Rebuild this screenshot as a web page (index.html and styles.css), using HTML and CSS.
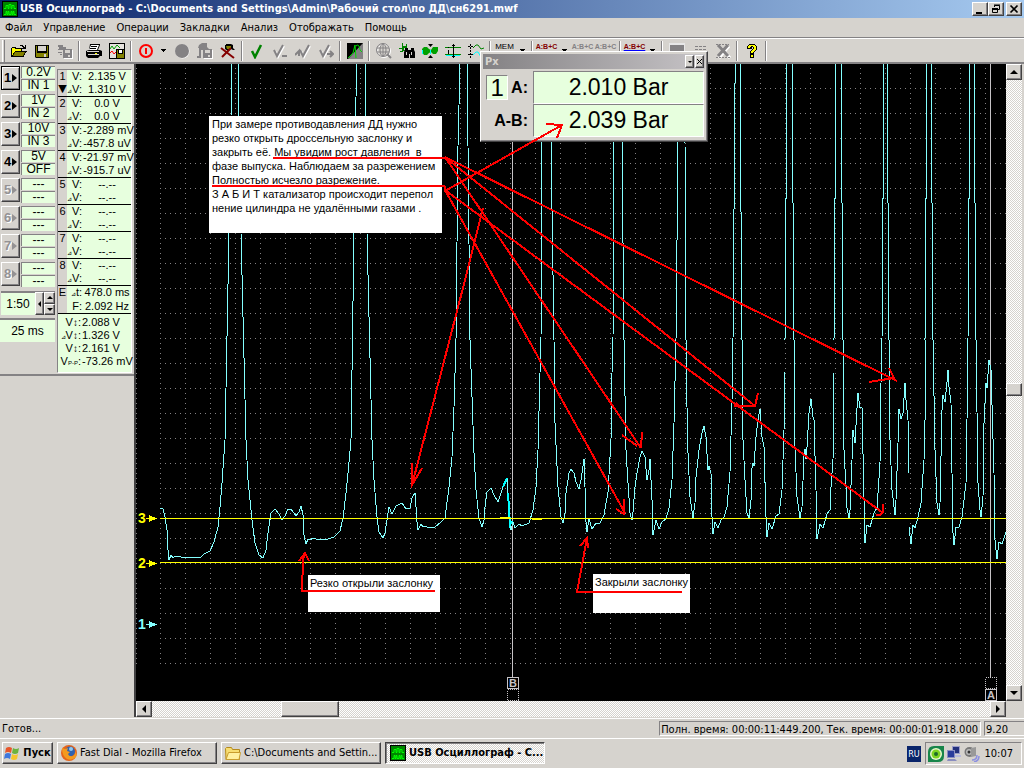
FILE: index.html
```html
<!DOCTYPE html>
<html lang="ru">
<head>
<meta charset="utf-8">
<title>USB Осциллограф</title>
<link rel="stylesheet" href="styles.css">
</head>
<body>
<svg class="defs" aria-hidden="true">
  <symbol id="app" viewBox="0 0 16 16"><path fill="#000" d="M0 0h16v16H0z"/><path fill="#008400" d="M1 1h14v14H1z"/><path fill="none" stroke="#0f0" d="M2 7.500h2v-3h2v3h1v-4h2v4h1v-3h2v3h2M2 13.500h2v-3h1v3h1v-3h1v3h2v-3h1v3h1v-3h1v3h2"/></symbol>
  <symbol id="diskgrey" viewBox="0 0 16 16"><path fill="#fff" d="M7 7h9v9H7z"/><path fill="#848284" d="M1 2h5v2h3v2H6v1H1V6h1V4H1zM1 9h4v1H1zM3 11h2v1H3zM6 6h9v9H6z"/><path fill="#d6d3ce" d="M8 7h5v3H8zM11 12h2v2h-2z"/></symbol>
  <symbol id="checkgrey" viewBox="0 0 16 16"><path fill="none" stroke="#fff" stroke-width="2" d="M3 8l3 6 6-11"/><path fill="none" stroke="#848284" stroke-width="2" d="M2 7l3 6 6-11"/></symbol>
</svg>

<header class="titlebar">
  <svg class="i16"><use href="#app"/></svg>
  <h1>USB Осциллограф - C:\Documents and Settings\Admin\Рабочий стол\по ДД\сн6291.mwf</h1>
  <div class="winbtns">
    <button aria-label="Свернуть"><svg viewBox="0 0 12 10"><path d="M2 8h6v2H2z"/></svg></button>
    <button aria-label="Восстановить"><svg viewBox="0 0 12 10"><path fill="none" stroke="#000" d="M4.500 3V1.500h5v4H8M2.500 4.500h5v4h-5zM4 1h6M2 4.500h6M2 5.500h6"/></svg></button>
    <button class="close" aria-label="Закрыть"><svg viewBox="0 0 12 10"><path stroke="#000" stroke-width="1.700" d="M2.500 1.500l7 7M9.500 1.500l-7 7"/></svg></button>
  </div>
</header>

<nav class="menubar">
  <a href="#">Файл</a><a href="#">Управление</a><a href="#">Операции</a><a href="#">Закладки</a><a href="#">Анализ</a><a href="#">Отображать</a><a href="#">Помощь</a>
</nav>

<div class="toolbar" role="toolbar">
  <i class="grip"></i>
  <button aria-label="Открыть"><svg class="i16" viewBox="0 0 16 16"><path fill="#000" d="M0 5h1V4h4v1h6v3h5v1h-1v1h-1v2h-1v2H0zM9 2h3v1h1v1h1V2h1v4h-4V5h1V4h-1V3H9z"/><path fill="#ff0" d="M1 5h3v1h6v2H4v1H3v1H2v2H1z"/><path fill="#848200" d="M4 9h10l-2 4H2z"/></svg></button>
  <button aria-label="Сохранить"><svg class="i16" viewBox="0 0 16 16"><path d="M1 2h14v13H2l-1-1z"/><path fill="#848200" d="M2 3h1v7h10V3h1v11H2z"/><path fill="#d6d3ce" d="M4 3h8v5H4zM10 11h2v3h-2z"/></svg></button>
  <button aria-label="Импорт"><svg class="i16"><use href="#diskgrey"/></svg></button>
  <i class="sep"></i>
  <button aria-label="Печать"><svg class="i16" viewBox="0 0 16 16"><path d="M4 1h10v1l-2 5h2l2 1v5h-2l-2 2H2l-2-2V8l3-1z"/><path fill="#fff" d="M5 2h8l-2 5H3z"/><path fill="none" stroke="#000" d="M5 3.500h6M4 5.500h6"/><path fill="#d6d3ce" d="M1 8h12v1H1zM2 11h11v1H2z"/><path fill="#ff0" d="M9 10h2v1H9z"/></svg></button>
  <button aria-label="Сохранить график"><svg class="i16" viewBox="0 0 16 16"><path d="M0 0h16v16H0z"/><path fill="#e7e3de" d="M1 1h14v14H1z"/><path fill="none" stroke="#f00" d="M1 10l2-2 2 3 2-2"/><path fill="none" stroke="#00a000" d="M1 6l2-3 2 3 3-4 3 3"/><path d="M7 6h9v10H7z"/><path fill="#848200" d="M8 7h1v4h5V7h1v8H8z"/><path fill="#fff" d="M10 7h3v3h-3z"/></svg></button>
  <i class="sep"></i>
  <button aria-label="Пуск записи"><svg class="i16" viewBox="0 0 16 16"><circle cx="8" cy="8" r="6" fill="none" stroke="#f00" stroke-width="2"/><path fill="#f00" d="M7 5h2v6H7z"/></svg></button>
  <button class="drop" aria-label="Режим"><svg viewBox="0 0 5 3"><path d="M0 0h5v1H4v1H3v1H2V2H1V1H0z"/></svg></button>
  <button aria-label="Запись"><svg class="i16" viewBox="0 0 16 16"><circle cx="8.500" cy="8.500" r="7" fill="#fff"/><circle cx="8" cy="8" r="7" fill="#848284"/></svg></button>
  <button aria-label="Переместить"><svg class="i16" viewBox="0 0 16 16"><path fill="#fff" d="M7 7h9v9H7z"/><path fill="#848284" d="M2 2l3-2h5v4l2 2h3v9H6V7H4v8H0v-2h2V5H1z"/><path fill="#d6d3ce" d="M8 7h5v3H8zM11 12h2v2h-2z"/></svg></button>
  <button aria-label="Удалить"><svg class="i16" viewBox="0 0 16 16"><path d="M5 2h1V1h5l2 1v3l2 2h-2l-2-1-3 2-3-2z"/><path fill="#848200" d="M6 3h5v3H7z"/><path fill="none" stroke="#840000" stroke-width="2" d="M1 5l13 10M11 5L2 14"/></svg></button>
  <i class="sep"></i>
  <button aria-label="Закладка"><svg class="i16" viewBox="0 0 16 16"><path fill="none" stroke="#008200" stroke-width="2.500" d="M3 8l3 6 6-12"/></svg></button>
  <button aria-label="Удалить закладку"><svg class="i16" viewBox="0 0 16 16"><use href="#checkgrey"/><path fill="#848284" d="M10 12h5v2h-5z"/></svg></button>
  <button aria-label="Предыдущая"><svg class="i16" viewBox="0 0 16 16"><g transform="translate(3)"><use href="#checkgrey" width="16" height="16"/></g><path fill="none" stroke="#848284" stroke-width="2" d="M0 12l4-4v5"/></svg></button>
  <button aria-label="Следующая"><svg class="i16" viewBox="0 0 16 16"><use href="#checkgrey"/><path fill="none" stroke="#848284" stroke-width="2" d="M9 11h6M12 8l3 3-3 3"/></svg></button>
  <i class="sep"></i>
  <button aria-label="Инверсия"><svg class="i16" viewBox="0 0 16 16"><path d="M0 0h16v16H0z"/><path fill="#848284" d="M16 0v16H1z"/><path fill="none" stroke="#0d0" d="M1 15l5-5 2-8 1 13M9 3q3-3 4 4l2 2"/></svg></button>
  <i class="sep"></i>
  <button aria-label="Сеть"><svg class="i16" viewBox="0 0 16 16"><g fill="none" stroke="#fff"><circle cx="8" cy="8" r="6.500"/></g><g fill="none" stroke="#848284"><circle cx="7" cy="7" r="6.500"/><path d="M1 5h12M1 9h12M7 1v12"/><ellipse cx="7" cy="7" rx="3" ry="6"/><path stroke-width="2" d="M11 11l4 4"/></g></svg></button>
  <button aria-label="Поиск"><svg class="i16" viewBox="0 0 16 16"><path fill="#008200" d="M3 0h1v3h3V1h1v4H5v2h1v1H3V6H0V5h3zM1 8h3v1H1z"/><path d="M6 5h3v2h3V5h3v2l1 2v6h-5v-4h-1v4H5V9l1-2z"/><path fill="#d6d3ce" d="M7 9h1v3H7zM12 9h1v3h-1z"/></svg></button>
  <button aria-label="Огибающая"><svg class="i16" viewBox="0 0 16 16"><path fill="#00a000" d="M0 6l2-2h3l2 2 2 1 2-3h5v4l-2 3h-3l-2-2-2 1-2 2H2L0 9z"/><path d="M6 1h5L8.500 4zM6 15h5l-2.500-3z"/><path fill="#0ff" d="M0 7h1v4H0zM8 7h1v4H8z"/></svg></button>
  <button aria-label="Курсоры"><svg class="i16" viewBox="0 0 16 16"><path fill="#008200" d="M0 4h16v1H0zM0 11h16v1H0z"/><path fill="#0ff" d="M1 12h14v1H1z"/><path d="M8 1h1v14H8zM7 2h3v1H7zM7 13h3v1H7zM3 4h1v1H3zM3 7h1v4H3z"/></svg></button>
  <button aria-label="Фаза"><svg class="i16" viewBox="0 0 16 16"><path stroke="#000" stroke-dasharray="2 1" d="M2.500 1v14M0 3.500h6M0 11.500h6"/><path fill="none" stroke="#008200" d="M5 5l3-3h2l3 4 3-1"/><path fill="none" stroke="#0ff" d="M5 12l3-3h2l3 5h3"/></svg></button>
  <i class="sep"></i>
  <button class="txt">MEM</button>
  <button class="drop" aria-label="Память"><svg viewBox="0 0 5 3"><path d="M0 0h5v1H4v1H3v1H2V2H1V1H0z"/></svg></button>
  <i class="sep"></i>
  <button class="txt red">A:B+C</button>
  <button class="drop" aria-label="Формула"><svg viewBox="0 0 5 3"><path d="M0 0h5v1H4v1H3v1H2V2H1V1H0z"/></svg></button>
  <button class="txt grey">A:B+C</button>
  <button class="txt grey">A:B+C</button>
  <i class="sep"></i>
  <button class="txt red under">A:B+C</button>
  <button class="drop" aria-label="Вид"><svg viewBox="0 0 5 3"><path d="M0 0h5v1H4v1H3v1H2V2H1V1H0z"/></svg></button>
  <i class="sep"></i>
  <button aria-label="Панель"><svg class="i16" viewBox="0 0 16 16"><path fill="#e7e7e7" d="M0 0h16v14H0z"/><path fill="#848284" d="M1 2h14v8H1z"/></svg></button>
  <button aria-label="Список"><svg class="i16" viewBox="0 0 16 16"><path stroke="#848284" stroke-dasharray="3 1" d="M3 3.500h11M3 6.500h11M3 9.500h11M3 12.500h11"/></svg></button>
  <button aria-label="Очистить"><svg class="i16" viewBox="0 0 16 16"><path fill="none" stroke="#fff" stroke-width="3" d="M4 3l11 12M14 3L4 15"/><path fill="none" stroke="#848284" stroke-width="3" d="M3 2l10 11M13 2L3 13"/><path fill="none" stroke="#848284" stroke-dasharray="2 1" d="M1 1.500h13M1 14.500h14"/></svg></button>
  <i class="sep"></i>
  <button aria-label="Справка"><svg class="i16" viewBox="0 0 16 16"><path d="M5 1h6v1h1v1h1v4h-1v1h-1v1h-1v2H6V8h1V7h1V6h1V4H8v2H3V3h1V2h1zM6 11h4v4H6z"/><path fill="#ff0" d="M5 2h6v1h1v4h-1v1h-1v1H9v1H7V8h1V7h1V6h1V4H9V3H7v1H6v1H4V3h1zM7 12h2v2H7z"/></svg></button>
  <i class="sep"></i>
</div>

<main class="work">
  <aside class="side">
    <div class="panels">
      <div class="channels">
        <div class="ch"><button class="on">1<i></i></button><span>0.2V</span><span>IN 1</span></div>
        <div class="ch"><button>2<i></i></button><span>1V</span><span>IN 2</span></div>
        <div class="ch"><button>3<i></i></button><span>10V</span><span>IN 3</span></div>
        <div class="ch"><button>4<i></i></button><span>5V</span><span>OFF</span></div>
        <div class="ch"><button disabled>5<i></i></button><span>---</span><span>---</span></div>
        <div class="ch"><button disabled>6<i></i></button><span>---</span><span>---</span></div>
        <div class="ch"><button disabled>7<i></i></button><span>---</span><span>---</span></div>
        <div class="ch"><button disabled>8<i></i></button><span>---</span><span>---</span></div>
        <div class="zoom">
          <input type="text" value="1:50" aria-label="Масштаб">
          <button class="bevel" aria-label="Сброс"><i class="tri left"></i></button>
          <div class="spin"><button class="bevel" aria-label="Больше"><i class="tri up"></i></button><button class="bevel" aria-label="Меньше"><i class="tri dn"></i></button></div>
        </div>
        <div class="time">25 ms</div>
      </div>
      <div class="readings">
        <table>
          <tbody><tr><th rowspan="2">1<b>▼</b></th><td>V:</td><td>2.135 V</td></tr><tr><td><small>⊿</small>V:</td><td>1.310 V</td></tr></tbody>
          <tbody><tr><th rowspan="2">2</th><td>V:</td><td>0.0 V</td></tr><tr><td><small>⊿</small>V:</td><td>0.0 V</td></tr></tbody>
          <tbody><tr><th rowspan="2">3</th><td>V:</td><td>-2.289 mV</td></tr><tr><td><small>⊿</small>V:</td><td>-457.8 uV</td></tr></tbody>
          <tbody><tr><th rowspan="2">4</th><td>V:</td><td>-21.97 mV</td></tr><tr><td><small>⊿</small>V:</td><td>-915.7 uV</td></tr></tbody>
          <tbody><tr><th rowspan="2">5</th><td>V:</td><td>--.--</td></tr><tr><td><small>⊿</small>V:</td><td>--.--</td></tr></tbody>
          <tbody><tr><th rowspan="2">6</th><td>V:</td><td>--.--</td></tr><tr><td><small>⊿</small>V:</td><td>--.--</td></tr></tbody>
          <tbody><tr><th rowspan="2">7</th><td>V:</td><td>--.--</td></tr><tr><td><small>⊿</small>V:</td><td>--.--</td></tr></tbody>
          <tbody><tr><th rowspan="2">8</th><td>V:</td><td>--.--</td></tr><tr><td><small>⊿</small>V:</td><td>--.--</td></tr></tbody>
          <tbody class="e"><tr><th rowspan="2">E</th><td><small>⊿</small>t:</td><td>478.0 ms</td></tr><tr><td>F:</td><td>2.092 Hz</td></tr></tbody>
        </table>
        <ul>
          <li><span>V<b>↕</b>:</span>2.088 V</li>
          <li><span><small>⊿</small>V<b>↕</b>:</span>1.326 V</li>
          <li><span>V<b>↕</b>:</span>2.161 V</li>
          <li><span>V<small>P-P</small>:</span>-73.26 mV</li>
        </ul>
      </div>
    </div>
  </aside>

  <section class="view">
    <div class="scope">
      <svg class="plot">
        <defs>
          <pattern id="gv" patternUnits="userSpaceOnUse" x="160" y="63" width="25" height="5"><path fill="#848284" d="M0 0h1v1H0z"/></pattern>
          <pattern id="gh" patternUnits="userSpaceOnUse" x="160" y="88" width="5" height="25"><path fill="#848284" d="M0 0h1v1H0z"/></pattern>
        </defs>
        <g transform="translate(-136 -64)">
          <path fill="url(#gv)" d="M160 64h2000v600H160z"/>
          <path fill="url(#gh)" d="M160 64h2000v600H160z"/>
          <path stroke="#848284" stroke-dasharray="1 4" d="M136.500 68v596"/>
          <path class="cursor" d="M512.500 64v613M990.500 64v613"/>
          <polyline class="wave" points="160,508 163,509 165,517 167,530 168,550 169,560 171,555 173,558 175,556 181,557 201,557 204,554 210,551 214,542 218,527 220,507 222,483 225,440 229,233 231,116 232,64"/>
          <polyline class="wave" points="238,64 239,116 241,233 246,440 248,480 252,520 255,543 259,555 263,558 266,550 268,533 271,513 275,509 279,514 282,520 285,516 288,509 291,509 296,516 299,512 301,506 303,515 304,535 306,544 308,539 310,540 313,538 316,539 328,539 334,537 340,531 343,518 346,493 348,473 351,440 354,233 356,97 357,64"/>
          <polyline class="wave" points="365,64 366,116 367,233 372,440 374,480 377,517 379,532 383,538 385,533 388,513 389,507 392,514 396,506 402,503 406,509 410,508 412,498 415,493 416,507 417,522 418,530 421,524 423,527 425,526 429,528 435,527 441,522 445,518 449,487 452,457 454,407 456,340 458,146 460,64"/>
          <polyline class="wave" points="467,64 468,146 470,340 472,397 474,453 476,490 479,518 482,527 484,520 485,507 487,492 491,488 494,495 498,502 501,493 503,487 507,478 508,493 510,523 511,530 513,522 515,528 519,524 522,526 529,523 533,510 536,487 538,450 540,373 541,340 542,143 543,64"/>
          <polyline class="wave" points="551,64 551,143 554,340 555,423 558,487 561,517 563,523 565,513 566,493 569,473 571,469 574,473 576,482 579,489 581,480 584,459 585,487 586,522 587,532 589,519 592,529 596,523 600,523 604,515 608,492 611,440 612,373 613,340 614,143 615,64"/>
          <polyline class="wave" points="622,64 622,143 624,340 626,450 628,483 630,513 632,520 633,512 635,487 637,473 640,457 642,451 645,457 647,480 649,470 650,459 652,500 652,527 653,535 656,520 659,529 662,522 666,519 669,508 672,480 674,423 676,340 678,143 679,64"/>
          <polyline class="wave" points="684,64 685,143 686,340 687,407 688,453 690,497 693,518 695,503 696,477 699,450 702,433 704,426 706,437 708,470 709,466 711,473 712,517 713,534 715,522 718,528 721,520 724,517 727,507 730,472 732,400 733,340 735,83 736,64"/>
          <polyline class="wave" points="740,64 740,83 742,340 743,440 745,480 747,513 749,518 751,500 752,468 753,463 754,466 756,437 758,420 760,409 762,437 764,447 766,517 767,537 769,523 772,529 776,516 779,514 782,490 784,430 785,372 785,340 787,64"/>
          <polyline class="wave" points="792,64 794,340 795,447 797,497 800,518 802,507 804,455 805,449 806,459 807,447 809,413 811,399 813,417 814,420 816,490 817,539 820,524 823,528 827,514 830,510 831,487 833,460 834,373 834,340 836,64"/>
          <polyline class="wave" points="841,64 843,340 844,450 846,487 847,508 849,518 850,510 852,460 853,430 855,443 857,408 858,393 860,408 862,407 864,500 865,543 867,525 870,527 874,513 877,508 880,463 881,383 882,340 884,64"/>
          <polyline class="wave" points="887,64 889,340 890,440 892,490 895,515 896,500 898,443 899,409 901,419 903,413 905,383 906,400 908,420 909,473 909,527 911,544 913,525 915,528 918,517 921,503 924,460 925,420 925,340 927,64"/>
          <polyline class="wave" points="931,64 933,340 935,450 937,503 939,515 940,503 942,410 943,395 945,402 947,382 948,370 949,387 951,403 952,473 953,533 954,545 956,527 959,527 962,517 966,483 967,420 968,340 970,64"/>
          <polyline class="wave" points="974,64 976,340 978,483 980,510 981,517 983,497 984,423 986,383 987,388 989,360 991,370 994,473 995,540 997,559 999,542 1002,544 1006,532"/>
          <path class="hot" d="M503 487l4-9M508 493l2 32 2-4"/>
          <path class="level" d="M160 518.500h2000M160 562.500h2000M500 517.500h10M532 519.500h10"/>
          <g class="lvl"><text x="138" y="523">3</text><text x="138" y="568">2</text><path d="M146 518h3v-3l8 3.500-8 3.500v-3h-3zM146 563h3v-3l8 3.500-8 3.500v-3h-3z"/></g>
          <g class="lvl one"><text x="138" y="629">1</text><path d="M146 624h3v-3l8 3.500-8 3.500v-3h-3z"/></g>
          <g class="mark"><rect x="507.500" y="677.500" width="11" height="11"/><rect x="985.500" y="689.500" width="11" height="11"/><g stroke-dasharray="1 1"><rect x="507.500" y="689.500" width="11" height="11"/><rect x="985.500" y="677.500" width="11" height="11"/></g><text x="513" y="687">B</text><text x="991" y="699">A</text></g>
        </g>
      </svg>

      <p class="note main">При замере противодавления ДД нужно
резко открыть дроссельную заслонку и
закрыть её. Мы увидим рост давления  в
фазе выпуска. Наблюдаем за разрежением
Полностью исчезло разрежение.
З А Б И Т катализатор происходит перепол
нение цилиндра не удалёнными газами .</p>
      <p class="note opened">Резко открыли заслонку</p>
      <p class="note closed">Закрыли заслонку</p>

      <section class="px">
        <header><h2>Px</h2><button class="bevel" aria-label="Меню"><i class="tri dn"></i></button><button class="bevel" aria-label="Закрыть панель"><svg viewBox="0 0 7 7"><path stroke="#000" d="M1 1l5 5M6 1L1 6"/></svg></button></header>
        <div class="pxbody">
          <div class="lab"><span class="num">1</span><b>A:</b></div><output>2.010 Bar</output>
          <div class="lab"><b>A-B:</b></div><output>2.039 Bar</output>
        </div>
      </section>

      <svg class="arrows">
        <g transform="translate(-136 -64)">
          <path d="M273 158H445M212 186H445M445 157L897 381M869 382l25-4-5-10M445 157L755 406M734 406h21l3-13M736 403l4 4M445 157L641 448M622 435l15 11M642 432l-1 16M483 208L464 284L412 485M412 463v22l10-17M445 157l5 4-3 0M445 190L883 513M883 504v8l-3 3h-4M445 190L625 513M616 509l8 5v-15M445 186v5L562 125M546 124l16 1-5 13M435 591H302L303 560L305 553M299 561l6-8 4 8M682 592H577L587 538M580 546l7-8 1 10"/>
        </g>
      </svg>
    </div>
    <div class="vbar"><button class="bevel" aria-label="Вверх"><i class="tri up"></i></button><div class="track"><i class="thumb bevel"></i></div><button class="bevel" aria-label="Вниз"><i class="tri dn"></i></button></div>
    <div class="hbar"><button class="bevel" aria-label="Влево"><i class="tri left"></i></button><div class="track"><i class="thumb bevel"></i></div><button class="bevel" aria-label="Вправо"><i class="tri right"></i></button></div>
  </section>
</main>

<footer class="status"><span class="ready">Готов...</span><span class="pane">Полн. время: 00:00:11:449.200, Тек. время: 00:00:01:918.000</span><span class="pane last">9.20</span></footer>

<div class="taskbar">
  <button class="bevel start"><svg class="i16" viewBox="0 0 16 16"><path fill="#e8562a" d="M2 3q3-2 6 0L7 8Q4 6 1 8z"/><path fill="#6cb33e" d="M9 3q3 2 6 0l-1 5q-3 2-6 0z"/><path fill="#3f78dd" d="M1 9q3-2 6 0l-1 5q-3-2-6 0z"/><path fill="#f5c52c" d="M8 9q3 2 6 0l-1 5q-3 2-6 0z"/></svg><b>Пуск</b></button>
  <button class="bevel task"><svg class="i16" viewBox="0 0 16 16"><circle cx="8" cy="8" r="8" fill="#e6641a"/><circle cx="9" cy="6.500" r="5" fill="#2f62b0"/><circle cx="10" cy="4" r="2" fill="#8fc8ee"/><path fill="#f39a1f" d="M1 3l3 1 3-1-1 3 3 1-2 2q1 3 5 2 3-2 2-5 3 4 0 7-4 3-8 1-5-3-5-11z"/></svg><span>Fast Dial - Mozilla Firefox</span></button>
  <button class="bevel task"><svg class="i16" viewBox="0 0 16 16"><path fill="#f7dd72" stroke="#b58a1c" d="M1 14.500L.500 3.500l1-1h5l1 2h7v10z"/><path fill="#fff0a0" stroke="#c99d2e" d="M3.500 7.500h12l-1.500 7H1z"/></svg><span>C:\Documents and Settin...</span></button>
  <button class="task active"><svg class="i16"><use href="#app"/></svg><b>USB Осциллограф - C...</b></button>
  <span class="lang">RU</span>
  <div class="tray">
    <svg class="i16" viewBox="0 0 16 16"><path fill="#18854a" d="M0 6q0-6 6-6h10v10q0 6-6 6H0z"/><circle cx="8" cy="8" r="6" fill="#e9f7d0"/><circle cx="8" cy="8" r="4.500" fill="#7ed321"/><circle cx="8" cy="8" r="2" fill="#1d6b2a"/></svg>
    <svg class="i16" viewBox="0 0 16 16"><path fill="#9a9cc8" d="M6 0h8v8H6z"/><path fill="#23307c" d="M7 1h6v6H7z"/><path fill="#8a8dc0" d="M1 4h8v8H1zM2 13h7l2 2H1z"/><path fill="#2a3c9c" d="M2 5h6v6H2z"/><path fill="#b8bade" d="M9 9h6v2H9z"/></svg>
    <svg class="i16" viewBox="0 0 16 16"><circle cx="5.500" cy="6" r="5" fill="#777"/><circle cx="5" cy="6" r="3" fill="#bbb"/><circle cx="5" cy="6" r="1.500" fill="#333"/><path fill="#999" d="M7 2l5-1v9L7 11z"/><path fill="none" stroke="#8c90e0" stroke-width="1.500" d="M8 14q5 0 5-5M10 16q5-1 5-6"/></svg>
    <time>10:07</time>
  </div>
</div>
</body>
</html>
```
FILE: styles.css
```css
* { box-sizing: border-box; }
html, body { height: 100%; }
body {
  margin: 0;
  display: flex;
  flex-direction: column;
  background: #d6d3ce;
  color: #000;
  font: 11px/14px "DejaVu Sans Condensed", "DejaVu Sans", sans-serif;
  overflow: hidden;
}
button, input { font: inherit; color: inherit; }
button {
  display: flex;
  align-items: center;
  justify-content: center;
  margin: 0;
  padding: 0;
  border: 0;
  background: #d6d3ce;
}
h1, h2, p, ul { margin: 0; padding: 0; }
.defs { position: absolute; width: 0; height: 0; }
.i16 { width: 16px; height: 16px; flex: none; }
.bevel {
  border: 1px solid;
  border-color: #fff #424142 #424142 #fff;
  box-shadow: inset -1px -1px #848284;
  background: #d6d3ce;
}

.titlebar {
  display: flex;
  align-items: center;
  flex: none;
  height: 18px;
  padding: 0 2px;
  gap: 2px;
  background: linear-gradient(to right, #0a246a, #a6caf0);
  color: #fff;
}
.titlebar h1 { flex: 1; font-size: 11px; line-height: 16px; white-space: nowrap; }
.winbtns { display: flex; }
.winbtns button {
  width: 16px;
  height: 14px;
  border: 1px solid;
  border-color: #fff #424142 #424142 #fff;
  box-shadow: inset -1px -1px #848284;
}
.winbtns svg { width: 12px; height: 10px; }
.winbtns .close { margin-left: 2px; }

.menubar {
  display: flex;
  flex: none;
  height: 20px;
  padding: 3px 5px;
  gap: 11px;
  border-bottom: 1px solid #848284;
}
.menubar a { color: #000; text-decoration: none; }

.toolbar {
  display: flex;
  align-items: center;
  flex: none;
  height: 26px;
  border-top: 1px solid #fff;
  border-bottom: 2px solid #848284;
}
.toolbar button { width: 23px; height: 22px; background: none; }
.toolbar .drop { width: 13px; }
.drop svg { width: 5px; height: 3px; }
.toolbar .txt { font: 8px/8px "Liberation Sans", sans-serif; align-items: flex-start; padding-top: 3px; }
.toolbar .txt.red { color: #840000; font-weight: bold; font-size: 7px; }
.toolbar .txt.grey { color: #848284; font-weight: bold; font-size: 7px; }
.toolbar .under { text-decoration: underline; text-decoration-color: #00f; }
.grip { width: 3px; height: 22px; margin: 0 2px; border-left: 1px solid #fff; border-right: 1px solid #848284; }
.sep { width: 2px; height: 20px; margin: 0 2px; border-left: 1px solid #848284; border-right: 1px solid #fff; }

.work { display: flex; flex: 1; min-height: 0; }
.side { flex: none; width: 136px; border-right: 2px solid #424142; }
.panels { display: flex; border-bottom: 2px solid #848284; height: 312px; }
.channels { width: 55px; padding-top: 2px; font: 12px/12px "Liberation Sans", sans-serif; text-align: center; }
.ch {
  display: grid;
  grid-template-columns: 19px 34px;
  grid-template-rows: 12px 12px;
  gap: 1px;
  padding-left: 1px;
  margin-bottom: 3px;
}
.ch button {
  grid-row: span 2;
  gap: 1px;
  height: 24px;
  border: 1px solid;
  border-color: #fff #424142 #424142 #fff;
  box-shadow: inset -1px -1px #848284;
  font: bold 13px/14px "Liberation Sans", sans-serif;
}
.ch button.on { border-color: #000; box-shadow: inset 1px 1px #fff, inset -1px -1px #848284; }
.ch button:disabled { color: #949294; text-shadow: 1px 1px #fff; }
.ch button i { border-left: 5px solid; border-top: 4px solid transparent; border-bottom: 4px solid transparent; }
.ch span, .time, .zoom input, .num, .pxbody output { background: #e7ffde; }
.ch span { border-top: 1px solid #848284; border-left: 1px solid #848284; white-space: nowrap; line-height: 11px; }
.zoom { display: grid; grid-template-columns: 1fr 9px 11px; height: 24px; margin: 4px 0 3px 1px; border-top: 1px solid #848284; }
.zoom input { min-width: 0; border: 0; border-top: 1px solid #848284; padding: 0; text-align: center; }
.spin { display: grid; grid-template-rows: 1fr 1fr; }
.time { height: 24px; line-height: 22px; border-top: 2px solid #848284; }
.tri { border: 3px solid transparent; }
.up { border-top: 0; border-bottom-color: #000; }
.dn { border-bottom: 0; border-top-color: #000; }
.left { border-left: 0; border-right-color: #000; }
.right { border-right: 0; border-left-color: #000; }

.readings {
  flex: 1;
  min-width: 0;
  margin: 5px 2px 1px 2px;
  border: 1px solid;
  border-color: #848284 #fff #fff #848284;
  background: #e7ffde;
  font: 11px/13px "Liberation Sans", sans-serif;
}
.readings table { width: 100%; table-layout: fixed; border-collapse: collapse; }
.readings tbody { border-bottom: 1px solid #000; }
.readings tr { height: 13px; }
.readings .e tr { height: 14px; }
.readings th { width: 9px; padding: 0; background: #d6d3ce; font-weight: normal; vertical-align: top; }
.readings th b { display: block; font: 11px/11px "DejaVu Sans", sans-serif; }
.readings td { height: 13px; padding: 0; white-space: nowrap; text-align: center; line-height: 13px; }
.readings td:nth-last-child(2) { width: 15px; text-align: right; }
.readings td:last-child { padding-left: 1px; }
.readings small { font-size: 6px; line-height: 8px; }
.readings ul { list-style: none; padding: 2px 0 3px; }
.readings li { display: flex; gap: 1px; white-space: nowrap; }
.readings li span { width: 23px; flex: none; text-align: right; }
.readings b { font-size: 10px; }

.view { flex: 1; min-width: 0; display: grid; grid-template: 1fr 16px / 1fr 16px; padding-right: 2px; }
.scope { position: relative; background: #000; }
.plot, .arrows { position: absolute; left: 0; top: 0; width: 100%; height: 100%; shape-rendering: crispEdges; }
.wave { fill: none; stroke: #84ffff; stroke-width: 1; }
.hot { fill: none; stroke: #0ff; stroke-width: 2; }
.cursor { stroke: #c6c3c6; }
.level { stroke: #ff0; }
.lvl { fill: #ff0; font: bold 14px "Liberation Sans", sans-serif; }
.lvl.one { fill: #84ffff; }
.mark { fill: none; stroke: #c6c3c6; }
.mark text { fill: #c6c3c6; stroke: none; text-anchor: middle; font: bold 11px "Liberation Sans", sans-serif; }
.arrows { pointer-events: none; }
.arrows path { fill: none; stroke: #f00; stroke-width: 2; }

.note { position: absolute; background: #fff; padding: 1px 2px; font: 11px/14px "Liberation Sans", sans-serif; white-space: pre; }
.note.main { left: 73px; top: 52px; width: 233px; height: 117px; padding: 1px 3px; }
.note.opened { left: 172px; top: 511px; width: 132px; height: 37px; }
.note.closed { left: 457px; top: 510px; width: 97px; height: 39px; }

.px {
  position: absolute;
  left: 344px;
  top: -13px;
  width: 228px;
  padding: 2px;
  border: 1px solid;
  border-color: #fff #424142 #424142 #fff;
  box-shadow: inset -1px -1px #848284;
  background: #d6d3ce;
}
.px header { display: flex; align-items: center; height: 15px; padding: 0 1px 0 2px; gap: 1px; background: linear-gradient(to right, #848284, #c6c3c6); }
.px h2 { flex: 1; font-size: 11px; line-height: 15px; color: #d6d3ce; }
.px header button { width: 9px; height: 13px; }
.px header button svg { width: 7px; height: 7px; flex: none; }
.px .dn { border-width: 2px; border-bottom: 0; }
.pxbody { display: grid; grid-template-columns: 48px 1fr; padding: 2px 1px 2px 2px; }
.lab { display: flex; align-items: center; justify-content: flex-end; gap: 3px; padding-right: 5px; font: 16px/20px "Liberation Sans", sans-serif; }
.num { width: 22px; height: 25px; border: 1px solid; border-color: #848284 #fff #fff #848284; font: 24px/24px "Liberation Sans", sans-serif; text-align: center; }
.pxbody output { height: 33px; border: 1px solid; border-color: #848284 #fff #fff #848284; font: 23px/31px "Liberation Sans", sans-serif; text-align: center; }

.vbar, .hbar { display: flex; }
.vbar { flex-direction: column; }
.vbar button, .hbar button { width: 16px; height: 16px; flex: none; }
.vbar .up { border-width: 0 4px 4px; }
.vbar .dn { border-width: 4px 4px 0; }
.hbar .left { border-width: 4px 4px 4px 0; }
.hbar .right { border-width: 4px 0 4px 4px; }
.track { flex: 1; display: flex; background: repeating-conic-gradient(#fff 0 25%, #d6d3ce 0 50%) 0 0 / 2px 2px; }
.vbar .thumb { width: 16px; height: 13px; margin-top: 303px; }
.hbar .thumb { width: 58px; height: 16px; margin-left: 129px; }

.status { display: flex; flex: none; height: 20px; margin-top: 1px; padding: 2px 0 2px 2px; gap: 3px; border-top: 1px solid #fff; line-height: 15px; }
.ready { flex: 1; }
.pane { border: 1px solid; border-color: #848284 #fff #fff #848284; padding: 0 2px 0 1px; }
.pane.last { width: 40px; border-right: 0; }

.taskbar { display: flex; flex: none; height: 30px; padding: 3px 2px; gap: 4px; border-top: 1px solid #fff; }
.taskbar button { height: 22px; gap: 3px; padding: 0 3px; white-space: nowrap; }
.start { width: 51px; }
.taskbar .task { width: 160px; justify-content: flex-start; overflow: hidden; }
.taskbar .active {
  border: 1px solid;
  border-color: #424142 #fff #fff #424142;
  box-shadow: inset 1px 1px #848284;
  padding: 0 0 0 4px;
  background: repeating-conic-gradient(#fff 0 25%, #d6d3ce 0 50%) 0 0 / 2px 2px;
}
.lang { margin: 4px 0 3px auto; width: 14px; background: #0a246a; color: #fff; font-size: 9px; line-height: 16px; text-align: center; }
.tray { display: flex; align-items: center; gap: 2px; width: 97px; padding: 0 8px 0 2px; border: 1px solid; border-color: #848284 #fff #fff #848284; }
.tray time { margin-left: auto; }
```
